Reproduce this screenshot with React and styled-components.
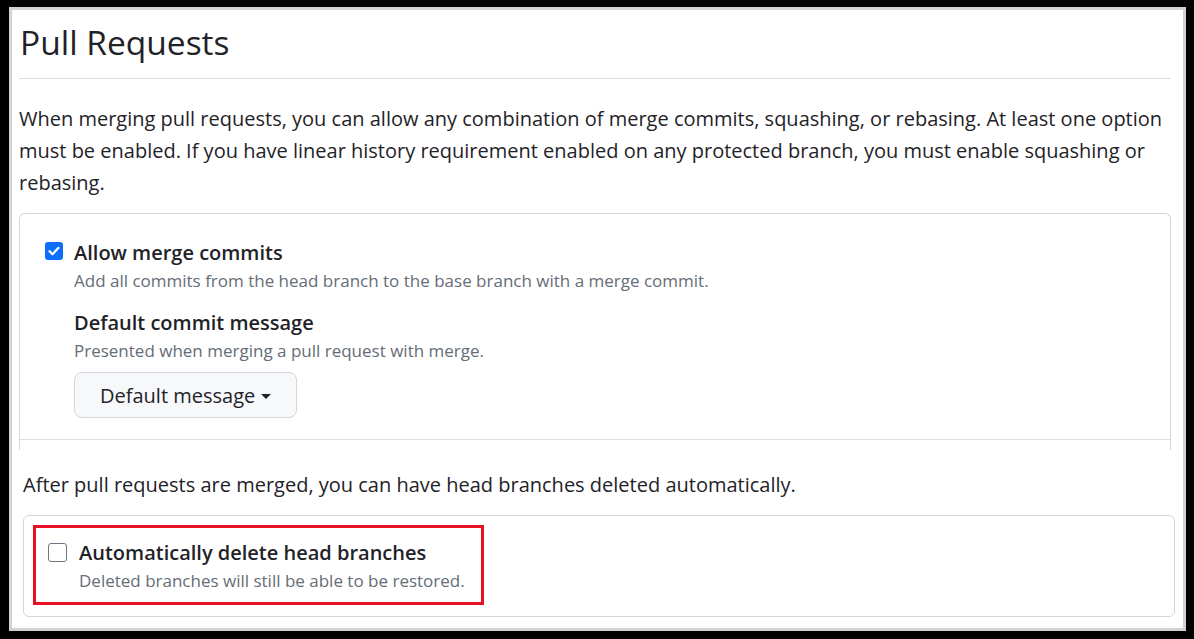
import React from 'react';
import styled, { createGlobalStyle } from 'styled-components';

const GlobalStyle = createGlobalStyle`
  html, body {
    margin: 0;
    padding: 0;
    background: #000;
  }
  body {
    font-family: "Open Sans", "Noto Sans", "Liberation Sans", sans-serif;
    color: #1f2328;
  }
`;

const Frame = styled.div`
  width: 1194px;
  height: 639px;
  box-sizing: border-box;
  padding: 7px 8px 8px 9px;
  background: #000;
  overflow: hidden;
`;

const Sheet = styled.div`
  height: 100%;
  box-sizing: border-box;
  background: #fff;
  border: 3px solid #d2d2d2;
  padding: 0 12px 0 7px;
  overflow: hidden;
`;

const Title = styled.h2`
  margin: 0;
  padding: 10px 0 14px 1px;
  font-size: 33.5px;
  line-height: 44px;
  font-weight: 400;
  border-bottom: 1px solid #d8dee4;
`;

const Lead = styled.p`
  margin: 24px 0 14px;
  font-size: 20px;
  line-height: 32px;
`;

const Section = styled.div`
  margin-left: ${({ $shift }) => $shift || 0}px;
  margin-right: ${({ $shift }) => -($shift || 0)}px;
`;

const Box = styled.div`
  border: 1px solid #d0d7de;
  border-radius: 6px;
  ${({ $cut }) =>
    $cut &&
    `
    border-bottom: none;
    border-bottom-left-radius: 0;
    border-bottom-right-radius: 0;
  `}
  padding: ${({ $inset }) => $inset || 0};
`;

const Row = styled.div`
  padding: ${({ $pad }) => $pad || '25px 25px 21px'};
  & + & {
    border-top: 1px solid #d8dee4;
  }
`;

const Option = styled.div`
  display: flex;
  align-items: flex-start;
  gap: ${({ $gap }) => $gap || 12}px;
`;

const Check = styled.span`
  flex: none;
  width: ${({ $size }) => $size}px;
  height: ${({ $size }) => $size}px;
  margin-top: ${({ $top }) => $top}px;
  box-sizing: border-box;
  border-radius: 3px;
  display: flex;
  align-items: center;
  justify-content: center;
  background: ${({ $on }) => ($on ? '#0d6efd' : '#fff')};
  border: ${({ $on }) => ($on ? 'none' : '1.5px solid #6e7781')};
`;

const Body = styled.div`
  display: flex;
  flex-direction: column;
`;

const Label = styled.div`
  font-size: 20px;
  line-height: 28px;
  font-weight: 600;
  margin-top: ${({ $gap }) => $gap || 0}px;
`;

const Note = styled.div`
  font-size: 17px;
  line-height: 28px;
  color: #656d76;
`;

const Menu = styled.button`
  align-self: flex-start;
  margin-top: 7px;
  height: 46px;
  padding: 0 25px;
  display: flex;
  align-items: center;
  gap: 6px;
  background: #f6f8fa;
  border: 1px solid #d0d7de;
  border-radius: 8px;
  font-family: inherit;
  font-size: 20px;
  font-weight: 500;
  color: #1f2328;
`;

const Caret = styled.span`
  width: 0;
  height: 0;
  border-left: 5px solid transparent;
  border-right: 5px solid transparent;
  border-top: 5px solid #1f2328;
  margin-top: 2px;
`;

const Tail = styled.div`
  height: 10px;
`;

const After = styled.p`
  margin: 21px 0 16px;
  font-size: 20px;
  line-height: 28px;
`;

const Highlight = styled.div`
  display: inline-block;
  border: 3px solid #e81123;
  padding: 11px 16px 7px 12px;
`;

const Tick = () => (
  <svg width="12" height="10" viewBox="0 0 12 10">
    <path d="M1.5 5.2 L4.5 8.2 L10.5 1.8" fill="none" stroke="#fff" strokeWidth="2.2" strokeLinecap="round" strokeLinejoin="round" />
  </svg>
);

export default function App() {
  return (
    <>
      <GlobalStyle />
      <Frame>
        <Sheet>
          <Title>Pull Requests</Title>
          <Lead>
            When merging pull requests, you can allow any combination of merge commits, squashing, or rebasing. At least one option must be enabled. If you have linear history requirement enabled on any protected branch, you must enable squashing or rebasing.
          </Lead>
          <Box $cut>
            <Row>
              <Option $gap={11}>
                <Check $on $size={18} $top={3}>
                  <Tick />
                </Check>
                <Body>
                  <Label>Allow merge commits</Label>
                  <Note>Add all commits from the head branch to the base branch with a merge commit.</Note>
                  <Label $gap={14}>Default commit message</Label>
                  <Note>Presented when merging a pull request with merge.</Note>
                  <Menu>
                    Default message <Caret />
                  </Menu>
                </Body>
              </Option>
            </Row>
            <Row $pad="0">
              <Tail />
            </Row>
          </Box>
          <Section $shift={4}>
            <After>After pull requests are merged, you can have head branches deleted automatically.</After>
            <Box $inset="9px 9px 11px">
              <Highlight>
                <Option>
                  <Check $size={19} $top={4} />
                  <Body>
                    <Label>Automatically delete head branches</Label>
                    <Note>Deleted branches will still be able to be restored.</Note>
                  </Body>
                </Option>
              </Highlight>
            </Box>
          </Section>
        </Sheet>
      </Frame>
    </>
  );
}
